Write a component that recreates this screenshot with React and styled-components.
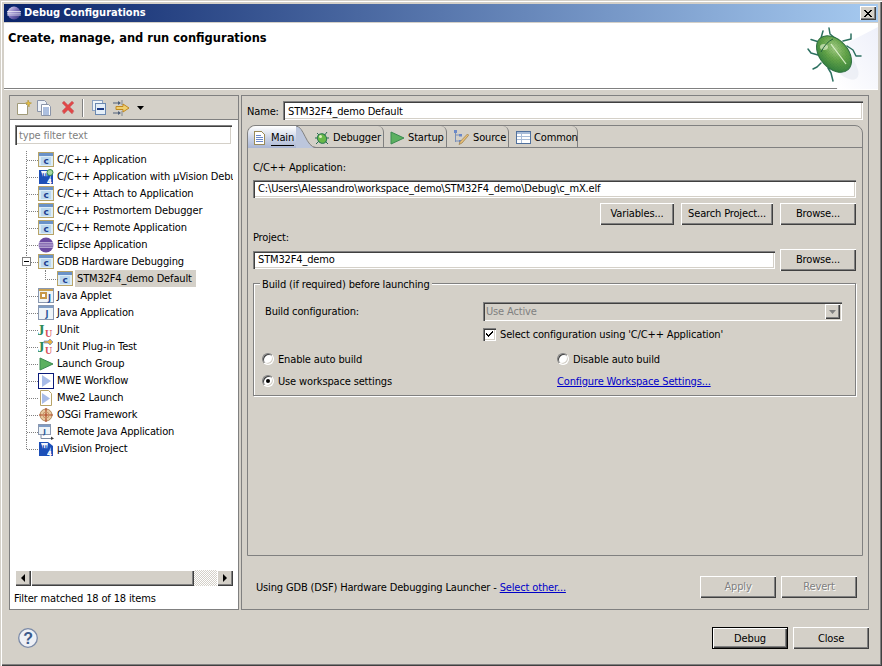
import React from "react";
import styled, { createGlobalStyle } from "styled-components";

const Global = createGlobalStyle`
  html, body { margin: 0; padding: 0; background: #d4d0c8; }
  * { box-sizing: border-box; }
  body { font-family: "DejaVu Sans Condensed", "DejaVu Sans", sans-serif; font-size: 11px; letter-spacing: -0.15px; color: #000; }
`;

const sunken = `box-shadow: inset 1px 1px #808080, inset 2px 2px #404040, inset -1px -1px #fff, inset -2px -2px #d4d0c8;`;
const raised = `box-shadow: inset 1px 1px #fff, inset -1px -1px #404040, inset -2px -2px #808080;`;

const Window = styled.div`
  width: 882px; height: 666px; padding: 4px 4px 3px; background: #d4d0c8; display: flex; flex-direction: column; overflow: hidden;
  box-shadow: inset 1px 1px #d4d0c8, inset 2px 2px #fff, inset -1px -1px #404040, inset -2px -2px #808080;
`;
const TitleBar = styled.div`
  height: 18px; flex: none; display: flex; align-items: center; gap: 3px; padding: 0 2px 0 3px;
  background: linear-gradient(90deg, #0a246a, #a6caf0); color: #fff; font-weight: bold; font-size: 11px; letter-spacing: 0;
`;
const TitleText = styled.span` flex: 1; padding-bottom: 1px; `;
const CloseBtn = styled.div`
  width: 16px; height: 14px; background: #d4d0c8; display: flex; align-items: center; justify-content: center; ${raised}
`;
const Banner = styled.div`
  height: 67px; flex: none; background: #fff; border-top: 1px solid #d4d0c8; border-bottom: 1px solid #808080;
  display: flex; justify-content: space-between; box-shadow: 0 1px #fff;
`;
const BannerTitle = styled.div` font-weight: bold; font-size: 12.75px; letter-spacing: 0; padding: 6px 0 0 4px; line-height: 18px; `;

const Body = styled.div`
  flex: none; height: 515px; margin-top: 6px; padding: 0 5px; display: flex; gap: 2px;
`;
const LeftPane = styled.div`
  width: 230px; flex: none; border: 1px solid #808080; display: flex; flex-direction: column; background: #fff;
`;
const ToolBar = styled.div`
  height: 24px; flex: none; background: #d4d0c8; border-bottom: 1px solid #808080; display: flex; align-items: center; padding: 0 0 0 6px;
`;
const ToolButton = styled.span` display: flex; margin-right: ${p => p.$gap}px; `;
const ToolSep = styled.span` width: 2px; height: 18px; margin-right: 8px; border-left: 1px solid #808080; border-right: 1px solid #fff; `;
const FilterBox = styled.div`
  height: 20px; margin: 5px 6px 0 5px; padding: 4px 4px 0; color: #808080; line-height: 14px; background: #fff; flex: none; ${sunken}
`;
const Tree = styled.div` margin: 6px 5px 0 5px; height: 419px; flex: none; overflow: hidden; `;
const TreeRow = styled.div`
  position: relative; height: 17px; display: flex; align-items: center; padding-left: ${p => (p.$child ? 42 : 23)}px; white-space: nowrap; gap: 3px;
  &::before {
    content: ""; position: absolute; border-bottom: 1px dotted #808080;
    ${p => p.$child
      ? `left: 30px; width: 12px; top: 0; height: 9px; border-left: 1px dotted #808080;`
      : `left: 12px; width: 11px; top: 8px; height: 1px;`}
  }
  &::after {
    content: ""; position: absolute; left: 11px; top: 0; border-left: 1px dotted #808080;
    height: ${p => (p.$last ? 9 : 17)}px;
  }
`;
const Expander = styled.span`
  position: absolute; z-index: 1; left: 7px; top: 4px; width: 9px; height: 9px; background: #fff; border: 1px solid #808080;
  &::before { content: ""; position: absolute; left: 1px; top: 3px; width: 5px; height: 1px; background: #000; }
`;
const RowLabel = styled.span`
  height: 17px; line-height: 17px; padding: 0 ${p => (p.$selected ? 2 : 0)}px; margin-left: ${p => (p.$selected ? -1 : 0)}px;
  background: ${p => (p.$selected ? "#d4d0c8" : "transparent")}; width: ${p => (p.$selected ? "121px" : "auto")};
`;
const ScrollBar = styled.div` margin: 0 5px 0 5px; height: 16px; flex: none; display: flex; `;
const ScrollButton = styled.div`
  width: 16px; background: #d4d0c8; display: flex; align-items: center; justify-content: center; ${raised}
`;
const ScrollThumb = styled.div` width: 163px; background: #d4d0c8; ${raised} `;
const ScrollTrack = styled.div`
  flex: 1; background: repeating-conic-gradient(#d4d0c8 0 25%, #fff 0 50%) 0 0 / 2px 2px;
`;
const FilterStatus = styled.div` padding: 6px 4px 0; line-height: 14px; `;

const RightPane = styled.div`
  width: 628px; flex: none; border: 1px solid #808080; padding: 5px 5px 0; display: flex; flex-direction: column;
`;
const NameRow = styled.div` display: flex; align-items: center; height: 19px; flex: none; `;
const NameLabel = styled.span` width: 36px; flex: none; padding-top: 1px; `;
const Input = styled.div`
  height: ${p => p.$h || 18}px; flex: ${p => (p.$grow ? "1" : "none")}; width: ${p => (p.$w ? p.$w + "px" : "auto")}; background: #fff; padding: 0 5px;
  line-height: ${p => (p.$h ? p.$h + 2 : 18)}px; ${sunken}
`;
const Folder = styled.div`
  margin-top: 5px; height: 431px; flex: none; border: 1px solid #808080; border-radius: 8px 8px 0 0; display: flex; flex-direction: column;
`;
const TabStrip = styled.div` height: 22px; flex: none; display: flex; border-bottom: 1px solid #808080; `;
const Tab = styled.div`
  position: relative; height: 22px; width: ${p => p.$w}px; flex: none; display: flex; align-items: center; gap: ${p => p.$gap}px; padding: 2px 0 0 ${p => p.$pad}px;
  border-right: ${p => (p.$active ? "none" : "1px solid #808080")}; border-top-right-radius: 6px; white-space: nowrap;
  background: ${p => (p.$active ? "linear-gradient(180deg, #ffffff 0%, #ccd4e6 55%, #aab6d3 100%)" : "transparent")};
  border-top-left-radius: ${p => (p.$active ? 8 : 0)}px;
  margin-bottom: -1px;
`;
const TabCurve = styled.svg` position: absolute; left: 48px; top: 0; `;
const TabLabel = styled.span`
  line-height: 14px; border-bottom: ${p => (p.$focus ? "1px solid #000" : "none")}; position: relative; z-index: 1;
`;
const FolderBody = styled.div` flex: 1; padding: 13px 6px 0 5px; display: flex; flex-direction: column; `;
const FieldLabel = styled.div` line-height: 14px; height: 14px; margin-bottom: ${p => p.$mb}px; `;
const ButtonRow = styled.div` display: flex; justify-content: flex-end; gap: 7px; margin: 5px 0 6px; `;
const Btn = styled.div`
  width: ${p => p.$w || 76}px; height: 22px; flex: none; background: #d4d0c8; text-align: center; line-height: 22px; 
  color: ${p => (p.$off ? "#808080" : "#000")};
  text-shadow: ${p => (p.$off ? "1px 1px 0 #fff" : "none")};
  ${raised}
  ${p => p.$def ? "outline: 1px solid #000; outline-offset: -1px; box-shadow: inset 2px 2px #fff, inset -2px -2px #404040, inset -3px -3px #808080;" : ""}
`;
const FooterBtn = styled(Btn)` line-height: 24px; `;
const ProjectRow = styled.div` display: flex; align-items: center; justify-content: space-between; height: 22px; `;
const Group = styled.div`
  position: relative; margin-top: 12px; height: 113px; border: 1px solid #808080; box-shadow: 1px 1px #fff, inset 1px 1px #fff;
  padding: 18px 13px 0 8px;
`;
const Legend = styled.span`
  position: absolute; left: 6px; top: -6px; background: #d4d0c8; padding: 0 2px; line-height: 14px;
`;
const ConfigGrid = styled.div` display: grid; grid-template-columns: 221px 1fr; row-gap: 6px; align-items: center; `;
const ConfigLabel = styled.div` padding-left: 3px; `;
const Combo = styled.div`
  height: 19px; background: #d4d0c8; display: flex; align-items: center; justify-content: space-between; padding: 0 2px 0 3px; color: #808080; ${sunken}
`;
const ComboBtn = styled.span`
  width: 15px; height: 15px; background: #d4d0c8; display: flex; align-items: center; justify-content: center; ${raised}
`;
const CheckRow = styled.div` display: flex; align-items: center; gap: 4px; height: 14px; `;
const CheckBox = styled.span`
  width: 13px; height: 13px; background: #fff; display: flex; flex: none; ${sunken}
`;
const RadioGrid = styled.div` display: grid; grid-template-columns: 295px 1fr; row-gap: 8px; margin-top: 11px; align-items: center; `;
const RadioRow = styled.div` display: flex; align-items: center; gap: 4px; height: 14px; `;
const Radio = styled.span`
  width: 12px; height: 12px; border-radius: 50%; flex: none; background: #fff; display: flex; align-items: center; justify-content: center;
  border: 1px solid; border-color: #808080 #fff #fff #808080; box-shadow: inset 1px 1px #404040, inset -1px -1px #d4d0c8;
`;
const RadioDot = styled.span` width: 4px; height: 4px; border-radius: 50%; background: #000; `;
const Link = styled.span` color: #0000c8; text-decoration: underline; `;
const LauncherRow = styled.div`
  margin-top: 20px; height: 22px; display: flex; align-items: center; padding: 0 6px 0 9px; gap: 5px; 
`;
const LauncherText = styled.div` flex: 1; `;
const Footer = styled.div`
  margin-top: 17px; height: 22px; flex: none; display: flex; align-items: center; gap: 5px; padding: 0 9px 0 14px;
`;
const Spacer = styled.div` flex: 1; `;
const IconWrap = styled.svg` flex: none; display: block; `;

const I = ({ children, w = 16, h = 16, crisp }) => (
  <IconWrap width={w} height={h} viewBox={`0 0 ${w} ${h}`} shapeRendering={crisp ? "crispEdges" : undefined}>{children}</IconWrap>
);

const CFile = () => (
  <I crisp>
    <rect x=".5" y=".5" width="15" height="14" fill="#dcecf6" stroke="#b8a468" />
    <rect x="1" y="1" width="14" height="3" fill="#6a92c8" />
    <rect x="3" y="5" width="10" height="8" fill="#bcd8ee" />
    <text x="8" y="12" textAnchor="middle" fontFamily="DejaVu Sans" fontWeight="bold" fontSize="9" fill="#1f3f8f" shapeRendering="auto">c</text>
  </I>
);
const JFile = () => (
  <I crisp>
    <rect x=".5" y=".5" width="15" height="14" fill="#eef4f8" stroke="#8a98b0" />
    <rect x="1" y="1" width="14" height="2" fill="#7e9cc4" />
    <text x="9" y="12" textAnchor="middle" fontFamily="DejaVu Sans" fontWeight="bold" fontSize="8" fill="#2a5a9a" shapeRendering="auto">J</text>
  </I>
);
const Applet = () => (
  <I crisp>
    <rect x=".5" y=".5" width="15" height="14" fill="#eef4f8" stroke="#8a98b0" />
    <rect x="1" y="1" width="14" height="2" fill="#c8a050" />
    <rect x="2" y="4" width="7" height="7" fill="#c89848" />
    <rect x="4" y="6" width="3" height="3" fill="#fff" />
    <text x="11.5" y="12.5" textAnchor="middle" fontFamily="DejaVu Sans" fontWeight="bold" fontSize="8" fill="#1f4f9a" shapeRendering="auto">J</text>
  </I>
);
const VisionMark = ({ gear }) => (
  <I>
    <path d="M1 1h9l5 4v10H1z" fill="#1c4fb8" />
    <path d="M3 2h7l-1 6H5z" fill="#fff" opacity=".95" />
    <path d="M9 14l4-8v8z" fill="#9cc0f0" />
    <text x="4" y="8" fontFamily="DejaVu Sans" fontWeight="bold" fontSize="7" fill="#1c4fb8">µ</text>
    <text x="9" y="14.5" fontFamily="DejaVu Sans" fontWeight="bold" fontSize="7" fill="#fff">4</text>
    {gear && <circle cx="12" cy="3.5" r="3" fill="#a8d8a0" stroke="#3a8a4a" />}
  </I>
);
const EclipseIcon = () => (
  <I>
    <circle cx="8" cy="8" r="7.5" fill="#6a4aa0" />
    <path d="M0 5.800h16M0 8h16M0 10.200h16" stroke="#f0ecf8" strokeWidth=".8" />
  </I>
);
const TitleIcon = () => (
  <I w={14} h={14}>
    <defs>
      <linearGradient id="titleSphere" x1="0" y1="0" x2="1" y2="1">
        <stop offset="0" stopColor="#e8e4f4" />
        <stop offset=".45" stopColor="#8478c0" />
        <stop offset="1" stopColor="#2c2878" />
      </linearGradient>
    </defs>
    <circle cx="7" cy="7" r="6.500" fill="url(#titleSphere)" />
    <path d="M0 5.500h14M0 7.200h14M0 9h14" stroke="#ffffff" strokeWidth=".7" />
  </I>
);
const JUnit = ({ plug }) => (
  <I>
    <text x="-1" y="13" fontFamily="Liberation Serif" fontWeight="bold" fontSize="15" fill="#2c8a5a">J</text>
    <text x="7" y="15" fontFamily="Liberation Serif" fontWeight="bold" fontSize="10" fill="#d8505a">U</text>
    {plug && <path d="M6 2h4l2-2 3 3-3 3-2-2H6z" fill="#e8b040" stroke="#6a88c8" strokeWidth=".7" />}
  </I>
);
const GreenPlay = () => (
  <I>
    <path d="M2 2L15 8L2 14z" fill="#5cb060" stroke="#3a8a50" />
  </I>
);
const Mwe = () => (
  <I crisp>
    <rect x=".5" y=".5" width="15" height="15" fill="#fff" stroke="#0a1a7a" />
    <path d="M4 2L13 8L4 14z" fill="#a8bce8" shapeRendering="auto" />
  </I>
);
const Mwe2 = () => (
  <I>
    <path d="M2.500 .5h8l3 3v12h-11z" fill="#fff" stroke="#b8a468" />
    <path d="M4 3L12 8.500L4 14z" fill="#a8bce8" />
  </I>
);
const Osgi = () => (
  <I>
    <circle cx="8" cy="8" r="6" fill="#e8c8a0" stroke="#b08858" />
    <path d="M8 1v14M1 8h14" stroke="#b04828" strokeWidth="1.200" />
    <circle cx="8" cy="8" r="3" fill="none" stroke="#c89868" />
  </I>
);
const RemoteJava = () => (
  <I>
    <rect x=".5" y=".5" width="12" height="10" fill="#eef4f8" stroke="#8a98b0" />
    <rect x="1" y="1" width="11" height="2" fill="#7e9cc4" />
    <text x="6.500" y="9.500" textAnchor="middle" fontFamily="DejaVu Sans" fontWeight="bold" fontSize="7" fill="#2a5a9a">J</text>
    <path d="M3 11v3.500h12" fill="none" stroke="#7a8aa0" />
    <path d="M13 12.500l3 2-3 1.500z" fill="#404040" />
  </I>
);
const PageIcon = () => (
  <I crisp>
    <path d="M1.500 1.500h7l3 3v10h-10z" fill="#fff" stroke="#9a8a58" />
    <path d="M3 5h5M3 7h7M3 9h7M3 11h7" stroke="#6a88c8" />
  </I>
);
const BugSmall = () => (
  <I>
    <path d="M3 3l3 3M13 2l-3 4M1 8h3M12 8h3M2 14l3-3M14 14l-3-3" stroke="#2a6a50" strokeWidth="1" />
    <ellipse cx="8" cy="8.500" rx="4.500" ry="5" fill="#68b848" stroke="#2a7a50" transform="rotate(-35 8 8.500)" />
    <circle cx="6.500" cy="6.500" r="1.500" fill="#dff0c0" />
  </I>
);
const SourceIcon = () => (
  <I>
    <path d="M2.500 1v11M2.500 5H6M2.500 11H6" stroke="#7a90b8" fill="none" />
    <rect x="1" y="0" width="3" height="3" fill="#6a88c8" />
    <rect x="6" y="4" width="3" height="2.500" fill="#6a88c8" />
    <rect x="6" y="10" width="3" height="2.500" fill="#6a88c8" />
    <path d="M14.500 4l1.200 1.200L9 13l-3 1.500L7.200 11.500z" fill="#e8c078" stroke="#987840" strokeWidth=".7" />
  </I>
);
const TableIcon = () => (
  <I crisp>
    <rect x=".5" y="1.500" width="14" height="12" fill="#fff" stroke="#50709c" />
    <rect x="1" y="2" width="13" height="2" fill="#a8bcd8" />
    <path d="M1 6.500h13M1 9.500h13M5.500 4v9" stroke="#a8bcd8" />
  </I>
);
const NewCfg = () => (
  <I>
    <path d="M1.500 3.500h8l2 2v9h-10z" fill="#fff" stroke="#a09a78" />
    <path d="M12 0l1 2.400L15.500 3l-2.200 1.200L13 7l-1-2.600L9.600 3l2.200-.8z" fill="#e8c040" stroke="#a88820" strokeWidth=".5" />
  </I>
);
const DupCfg = () => (
  <I>
    <path d="M1.500 .5h7l2 2v9h-9z" fill="#eef2f8" stroke="#8a94a8" />
    <path d="M5.500 4.500h7l2 2v9h-9z" fill="#fff" stroke="#8a94a8" />
    <path d="M7 8h6M7 10h6M7 12h6M7 14h6" stroke="#5a80c0" />
  </I>
);
const DelCfg = () => (
  <I>
    <path d="M2 3l2-2 4 4 4-4 2 2-4 4 4 4-2 3-4-4-4 4-2-3 4-4z" fill="#e04848" stroke="#c88080" strokeWidth=".8" />
  </I>
);
const Collapse = () => (
  <I>
    <rect x=".5" y=".5" width="10" height="10" fill="#eef4f8" stroke="#8aa0c0" />
    <rect x="3.500" y="3.500" width="10" height="11" fill="#e4eef8" stroke="#6a88b0" />
    <rect x="5" y="8" width="7" height="2" fill="#1c3c88" />
  </I>
);
const FilterCfg = () => (
  <I w={17} h={16}>
    <path d="M0 3h7M0 13h7" stroke="#50607a" />
    <path d="M5 1l3 2-3 2zM5 11l3 2-3 2z" fill="#50607a" />
    <path d="M9 0v5M9 11v5" stroke="#808890" />
    <path d="M3 6.500h7V4l6 4-6 4V9.500H3z" fill="#f0d070" stroke="#c08820" />
  </I>
);
const Caret = ({ dir, color = "#000" }) => {
  const d = { down: "M0 0h7L3.500 4z", left: "M4 0v8L0 4z", right: "M0 0v8L4 4z" }[dir];
  return <IconWrap width={dir === "down" ? 7 : 4} height={dir === "down" ? 4 : 8} viewBox={dir === "down" ? "0 0 7 4" : "0 0 4 8"}><path d={d} fill={color} /></IconWrap>;
};
const XGlyph = () => (
  <IconWrap width="8" height="7" viewBox="0 0 8 7" shapeRendering="crispEdges">
    <path d="M0 0h2v1h1v1h2V1h1V0h2v1H7v1H6v1H5v1h1v1h1v1h1v1H6V6H5V5H3v1H2v1H0V6h1V5h1V4h1V3H2V2H1V1H0z" fill="#000" />
  </IconWrap>
);
const HelpIcon = () => (
  <I w={20} h={20}>
    <circle cx="10" cy="10" r="9.300" fill="#eef0f6" stroke="#7a8aa8" strokeWidth="1.300" />
    <text x="10" y="16" textAnchor="middle" fontFamily="Liberation Sans" fontWeight="bold" fontSize="16" fill="#3c5a8c">?</text>
  </I>
);
const Check = () => (
  <IconWrap width="13" height="13" viewBox="0 0 13 13" shapeRendering="crispEdges">
    <path d="M3 5h1v1h1v1h1V6h1V5h1V4h1V3h1v2H9v1H8v1H7v1H6v1H5V8H4V7H3z" fill="#000" />
  </IconWrap>
);
const BugArt = () => (
  <svg width="82" height="66" viewBox="15 22 82 66">
    <defs>
      <radialGradient id="shell" cx=".4" cy=".35" r=".75">
        <stop offset="0" stopColor="#a4cc84" />
        <stop offset=".45" stopColor="#64a448" />
        <stop offset="1" stopColor="#2c7a3c" />
      </radialGradient>
      <linearGradient id="fade" x1="1" y1="0" x2="0" y2="1">
        <stop offset="0" stopColor="#eef0fa" />
        <stop offset="1" stopColor="#ffffff" />
      </linearGradient>
      <pattern id="speck" width="2" height="2" patternUnits="userSpaceOnUse">
        <rect width="1" height="1" fill="#2a6a34" opacity=".22" />
      </pattern>
    </defs>
    <path d="M97 26L66 42 56 88h41z" fill="url(#fade)" />
    <ellipse cx="61" cy="61" rx="22" ry="10" fill="#d8dce8" opacity=".35" transform="rotate(48 61 61)" />
    <g fill="none" stroke="#2c7060" strokeWidth="1.500" strokeLinecap="round" strokeLinejoin="round">
      <path d="M38 41L30 38.500M40 37l2-7M55 38l-6-5-1-6M62 40l8-2V33M66 45l6 4 3 6 5 0" />
      <path d="M37 54l-7-2-3-4M40 62l-4 4-4 2M47 67l3 5 2 8" />
    </g>
    <ellipse cx="53" cy="53" rx="21" ry="14" fill="url(#shell)" stroke="#2d7040" transform="rotate(48 53 53)" />
    <ellipse cx="53" cy="53" rx="21" ry="14" fill="url(#speck)" transform="rotate(48 53 53)" />
    <ellipse cx="43" cy="46" rx="4" ry="3" fill="#dcecc8" opacity=".7" />
    <path d="M40 51Q45 41 52 38" stroke="#1f6038" strokeWidth="1" fill="none" />
    <path d="M50 43L65 63" stroke="#d8f0c8" strokeWidth="1.200" />
  </svg>
);

const rows = [
  [CFile, "C/C++ Application"],
  [() => <VisionMark gear />, "C/C++ Application with µVision Debugger"],
  [CFile, "C/C++ Attach to Application"],
  [CFile, "C/C++ Postmortem Debugger"],
  [CFile, "C/C++ Remote Application"],
  [EclipseIcon, "Eclipse Application"],
  [CFile, "GDB Hardware Debugging", { expand: true }],
  [CFile, "STM32F4_demo Default", { child: true }],
  [Applet, "Java Applet"],
  [JFile, "Java Application"],
  [JUnit, "JUnit"],
  [() => <JUnit plug />, "JUnit Plug-in Test"],
  [GreenPlay, "Launch Group"],
  [Mwe, "MWE Workflow"],
  [Mwe2, "Mwe2 Launch"],
  [Osgi, "OSGi Framework"],
  [RemoteJava, "Remote Java Application"],
  [VisionMark, "µVision Project"],
];

export default function App() {
  return (
    <Window>
      <Global />
      <TitleBar>
        <TitleIcon />
        <TitleText>Debug Configurations</TitleText>
        <CloseBtn><XGlyph /></CloseBtn>
      </TitleBar>
      <Banner>
        <BannerTitle>Create, manage, and run configurations</BannerTitle>
        <BugArt />
      </Banner>
      <Body>
        <LeftPane>
          <ToolBar>
            <ToolButton $gap={4}><NewCfg /></ToolButton>
            <ToolButton $gap={8}><DupCfg /></ToolButton>
            <ToolButton $gap={6}><DelCfg /></ToolButton>
            <ToolSep />
            <ToolButton $gap={5}><Collapse /></ToolButton>
            <ToolButton $gap={7}><FilterCfg /></ToolButton>
            <Caret dir="down" />
          </ToolBar>
          <FilterBox>type filter text</FilterBox>
          <Tree>
            {rows.map(([Ico, label, o = {}], i) => (
              <TreeRow key={label} $child={o.child} $last={i === rows.length - 1}>
                {o.expand && <Expander />}
                <Ico />
                <RowLabel $selected={o.child}>{label}</RowLabel>
              </TreeRow>
            ))}
          </Tree>
          <ScrollBar>
            <ScrollButton><Caret dir="left" /></ScrollButton>
            <ScrollThumb />
            <ScrollTrack />
            <ScrollButton><Caret dir="right" /></ScrollButton>
          </ScrollBar>
          <FilterStatus>Filter matched 18 of 18 items</FilterStatus>
        </LeftPane>
        <RightPane>
          <NameRow>
            <NameLabel>Name:</NameLabel>
            <Input $h={19} $grow>STM32F4_demo Default</Input>
          </NameRow>
          <Folder>
            <TabStrip>
              <Tab $active $w={54} $pad={5} $gap={2}>
                <PageIcon /><TabLabel $focus>Main</TabLabel>
                <TabCurve width="20" height="22" viewBox="0 0 20 22">
                  <path d="M0 0C8 0 10 22 20 22L0 22z" fill="#bcc6dc" />
                  <path d="M0 0C8 0 10 21.500 20 21.500" fill="none" stroke="#808080" />
                </TabCurve>
              </Tab>
              <Tab $w={82} $pad={12} $gap={3}><BugSmall /><TabLabel>Debugger</TabLabel></Tab>
              <Tab $w={63} $pad={5} $gap={3}><GreenPlay /><TabLabel>Startup</TabLabel></Tab>
              <Tab $w={62} $pad={6} $gap={4}><SourceIcon /><TabLabel>Source</TabLabel></Tab>
              <Tab $w={69} $pad={7} $gap={2}><TableIcon /><TabLabel>Common</TabLabel></Tab>
            </TabStrip>
            <FolderBody>
              <FieldLabel $mb={5}>C/C++ Application:</FieldLabel>
              <Input>C:\Users\Alessandro\workspace_demo\STM32F4_demo\Debug\c_mX.elf</Input>
              <ButtonRow>
                <Btn $w={74}>Variables...</Btn>
                <Btn $w={92}>Search Project...</Btn>
                <Btn>Browse...</Btn>
              </ButtonRow>
              <FieldLabel $mb={4}>Project:</FieldLabel>
              <ProjectRow>
                <Input $w={522}>STM32F4_demo</Input>
                <Btn>Browse...</Btn>
              </ProjectRow>
              <Group>
                <Legend>Build (if required) before launching</Legend>
                <ConfigGrid>
                  <ConfigLabel>Build configuration:</ConfigLabel>
                  <Combo>Use Active<ComboBtn><Caret dir="down" color="#808080" /></ComboBtn></Combo>
                  <span />
                  <CheckRow><CheckBox><Check /></CheckBox>Select configuration using 'C/C++ Application'</CheckRow>
                </ConfigGrid>
                <RadioGrid>
                  <RadioRow><Radio />Enable auto build</RadioRow>
                  <RadioRow><Radio />Disable auto build</RadioRow>
                  <RadioRow><Radio><RadioDot /></Radio>Use workspace settings</RadioRow>
                  <Link>Configure Workspace Settings...</Link>
                </RadioGrid>
              </Group>
            </FolderBody>
          </Folder>
          <LauncherRow>
            <LauncherText>Using GDB (DSF) Hardware Debugging Launcher - <Link>Select other...</Link></LauncherText>
            <Btn $off>Apply</Btn>
            <Btn $off>Revert</Btn>
          </LauncherRow>
        </RightPane>
      </Body>
      <Footer>
        <HelpIcon />
        <Spacer />
        <FooterBtn $def>Debug</FooterBtn>
        <FooterBtn>Close</FooterBtn>
      </Footer>
    </Window>
  );
}
